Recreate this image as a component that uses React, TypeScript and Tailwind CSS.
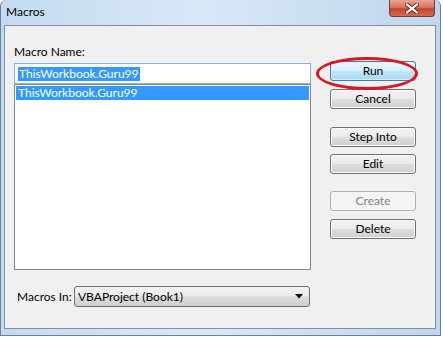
import React from 'react';

const btnBase =
  'h-[20px] w-[86px] flex items-center justify-center rounded-[3px] border text-[12px] leading-none whitespace-nowrap';
const btnNormal =
  'border-[#707070] text-black bg-[linear-gradient(to_bottom,#f2f2f2_0%,#ebebeb_48%,#dddddd_52%,#cfcfcf_100%)] shadow-[inset_0_0_0_1px_#fcfcfc]';
const btnDefault =
  'border-[#3c7fb1] text-black bg-[linear-gradient(to_bottom,#eaf6fd_0%,#d9f0fc_48%,#bee6fd_52%,#a7d9f5_100%)] shadow-[inset_0_0_0_1px_#d8eefb]';
const btnDisabled = 'border-[#adb2b5] text-[#838383] bg-[#f4f4f4]';

function Btn({ label, variant = 'normal', className = '' }: { label: string; variant?: 'normal' | 'default' | 'disabled'; className?: string }) {
  const v = variant === 'default' ? btnDefault : variant === 'disabled' ? btnDisabled : btnNormal;
  return <div className={`${btnBase} ${v} ${className}`}>{label}</div>;
}

export default function App() {
  return (
    <div
      className="relative w-[443px] h-[337px] bg-white overflow-hidden"
      style={{ fontFamily: 'Lato, "Noto Sans", sans-serif' }}
    >
      {/* window frame */}
      <div className="w-[441px] h-[336px] rounded-t-[6px] border border-[#6a7f99] border-t-0 bg-[linear-gradient(to_right,#c4daf1,#d9e8f7_45%,#bfd6ef_100%)] flex flex-col">
        {/* title bar */}
        <div className="h-[25px] flex items-start justify-between">
          <div className="pl-[5px] pt-[4px] text-[12px] leading-[16px] text-black">Macros</div>
          <div className="mr-[5px] w-[46px] h-[17px] rounded-b-[4px] border border-t-0 border-[#7a3b33] bg-[linear-gradient(to_bottom,#e8a493_0%,#d9735e_45%,#c8452c_55%,#d56a4e_100%)] flex items-center justify-center">
            <svg width="14" height="11" viewBox="0 0 14 11">
              <path d="M2 1.5 L12 9.5 M12 1.5 L2 9.5" stroke="#5a2a22" strokeWidth="4" strokeLinecap="square" />
              <path d="M2 1.5 L12 9.5 M12 1.5 L2 9.5" stroke="#ffffff" strokeWidth="2.2" strokeLinecap="square" />
            </svg>
          </div>
        </div>
        {/* client area */}
        <div className="ml-[3px] w-[432px] h-[304px] border border-[#83909f] bg-[#f0f0f0] flex">
          {/* left column */}
          <div className="ml-[9px] w-[297px] pt-[18px] flex flex-col">
            <div className="text-[12px] leading-[16px] text-black">Macro Name:</div>
            <div className="mt-[3px] h-[21px] border border-[#7eb4ea] bg-white flex items-center pl-[3px]">
              <span className="bg-[#3399ff] text-white text-[12px] leading-[14px] px-[1px]">ThisWorkbook.Guru99</span>
            </div>
            <div className="h-[186px] border border-[#828790] bg-white p-[1px]">
              <div className="h-[14px] bg-[#3399ff] text-white text-[12px] leading-[14px] pl-[2px]">ThisWorkbook.Guru99</div>
            </div>
            <div className="mt-[16px] flex items-center">
              <div className="w-[60px] pl-[3px] text-[12px] leading-[16px] text-black whitespace-nowrap">Macros In:</div>
              <div className="w-[236px] h-[21px] rounded-[3px] border border-[#707070] bg-[linear-gradient(to_bottom,#f2f2f2_0%,#ebebeb_48%,#dddddd_52%,#cfcfcf_100%)] flex items-center justify-between pl-[3px] pr-[6px]">
                <span className="text-[12px] leading-[14px] text-black">VBAProject (Book1)</span>
                <svg width="8" height="5" viewBox="0 0 8 5">
                  <path d="M0 0 H8 L4 4.5 Z" fill="#000" />
                </svg>
              </div>
            </div>
          </div>
          {/* right column */}
          <div className="ml-[19px] pt-[35px] flex flex-col">
            <Btn label="Run" variant="default" />
            <Btn label="Cancel" className="mt-[8px]" />
            <Btn label="Step Into" className="mt-[18px]" />
            <Btn label="Edit" className="mt-[7px]" />
            <Btn label="Create" variant="disabled" className="mt-[17px]" />
            <Btn label="Delete" className="mt-[8px]" />
          </div>
        </div>
      </div>
      {/* red annotation ellipse */}
      <div className="absolute left-[316px] top-[57px] w-[102px] h-[33px] rounded-[50%] border-[3px] border-[#e0141e]" />
    </div>
  );
}
